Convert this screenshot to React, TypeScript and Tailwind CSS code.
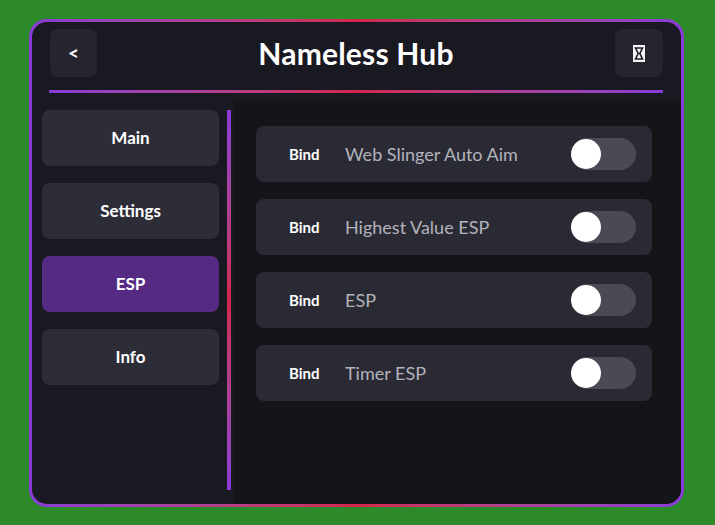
import React from 'react';

const tabs = ['Main', 'Settings', 'ESP', 'Info'];
const features = ['Web Slinger Auto Aim', 'Highest Value ESP', 'ESP', 'Timer ESP'];

function CloseGlyph() {
  return (
    <svg width="12" height="17" viewBox="0 0 12 17">
      <rect x="0" y="0" width="12" height="17" fill="#f4f4f6" />
      <path d="M2.5 3 L9.5 3 L6.8 8.5 L9.5 14 L2.5 14 L5.2 8.5 Z" fill="none" stroke="#1b1b24" strokeWidth="1.6" />
    </svg>
  );
}

function Toggle() {
  return (
    <div className="w-[65px] h-[32px] rounded-full bg-[#4a4a55] flex items-center">
      <div className="w-[30px] h-[30px] rounded-full bg-white" />
    </div>
  );
}

export default function App() {
  return (
    <div
      className="w-[715px] h-[525px] bg-[#2d8a2a] pt-[19px] pl-[29px]"
      style={{ fontFamily: 'Lato, "Noto Sans", sans-serif' }}
    >
      <div className="w-[655px] h-[488px] rounded-[18px] p-[3px] bg-gradient-to-r from-[#8a3ad8] via-[#d4244c] to-[#8a3ad8]">
        <div className="w-full h-full rounded-[15px] bg-[#191921] overflow-hidden flex flex-col">
          {/* header */}
          <div className="flex items-center justify-between pt-[7px] pl-[18px] pr-[18px]">
            <div className="w-[47px] h-[48px] rounded-[8px] bg-[#252530] flex items-center justify-center text-white font-bold text-[19px]">
              &lt;
            </div>
            <div className="text-white font-bold text-[30px] tracking-[0.2px]">Nameless Hub</div>
            <div className="w-[48px] h-[48px] rounded-[8px] bg-[#252530] flex items-center justify-center">
              <CloseGlyph />
            </div>
          </div>
          <div className="mt-[13px] ml-[17px] mr-[18px] h-[3px] bg-gradient-to-r from-[#8a3ad8] via-[#d4244c] to-[#8a3ad8]" />

          {/* body */}
          <div className="flex flex-1 min-h-0">
            <div className="w-[194px] pt-[17px] pl-[10px] flex flex-col gap-[17px]">
              {tabs.map((t) => (
                <div
                  key={t}
                  className={`w-[177px] h-[56px] rounded-[8px] flex items-center justify-center text-white font-bold text-[17px] ${
                    t === 'ESP' ? 'bg-[#552a83]' : 'bg-[#2d2d38]'
                  }`}
                >
                  {t}
                </div>
              ))}
            </div>
            <div className="pt-[17px] pb-[14px] ml-[1px]">
              <div className="w-[4px] h-full bg-gradient-to-b from-[#8a3ad8] via-[#d4244c] to-[#8a3ad8]" />
            </div>
            <div className="flex-1 mt-[8px] ml-[2px] bg-[#141419] pt-[25px] pl-[23px] pr-[29px] flex flex-col gap-[17px]">
              {features.map((f) => (
                <div key={f} className="h-[56px] rounded-[8px] bg-[#2a2a35] flex items-center pl-[33px] pr-[16px]">
                  <span className="text-white font-bold text-[15px] w-[56px]">Bind</span>
                  <span className="text-[#b3b3bc] text-[18px] flex-1">{f}</span>
                  <Toggle />
                </div>
              ))}
            </div>
          </div>
        </div>
      </div>
    </div>
  );
}
